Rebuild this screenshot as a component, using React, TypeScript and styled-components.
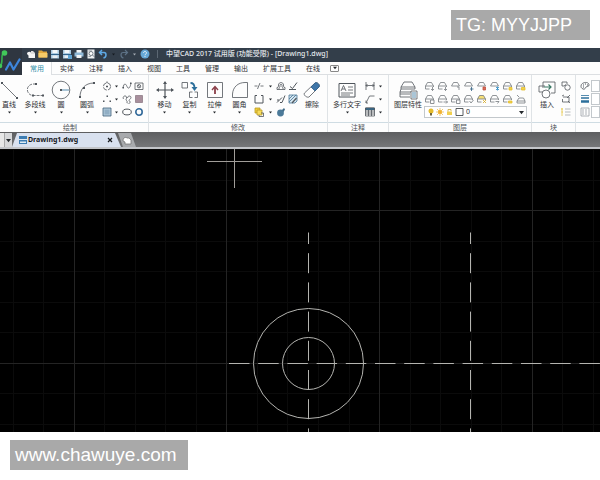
import React, { ReactNode } from "react";
import styled, { createGlobalStyle } from "styled-components";

const GlobalStyle = createGlobalStyle`
  * { box-sizing: border-box; }
  body {
    margin: 0;
    background: #fff;
    font-family: "Noto Sans", "Noto Sans CJK SC", sans-serif;
    font-size: 7px;
    color: #2d3034;
  }
  button, select, input {
    font: inherit;
    color: inherit;
    border: 0;
    padding: 0;
    margin: 0;
    background: none;
    border-radius: 0;
  }
`;

/* ---------- page frame ---------- */

const Page = styled.div`
  display: flex;
  flex-direction: column;
  min-height: 100vh;
`;

const Band = styled.div<{ $end?: boolean }>`
  display: flex;
  justify-content: ${(p) => (p.$end ? "flex-end" : "flex-start")};
  padding: ${(p) => (p.$end ? "10px 10px 8px" : "8px 10px 10px")};
`;

const Stamp = styled.div<{ $wide?: boolean }>`
  min-width: ${(p) => (p.$wide ? "178px" : "139px")};
  padding: 0 5px;
  background: #a9a9a9;
  color: #fff;
  font-family: "Liberation Sans", sans-serif;
  font-size: ${(p) => (p.$wide ? "19px" : "18px")};
  line-height: 30px;
  white-space: nowrap;
`;

const Window = styled.main`
  flex: 1;
  display: flex;
  flex-direction: column;
  overflow: hidden;
`;

/* ---------- title bar and menu ---------- */

const Top = styled.header`
  display: flex;
  background: #fdfdfd;
`;

const LogoBox = styled.div`
  flex: none;
  width: 22px;
  height: 27px;
  background: #2f3640;
`;

const TopRows = styled.div`
  flex: 1;
  min-width: 0;
`;

const TitleBar = styled.div`
  display: flex;
  align-items: center;
  height: 14px;
  padding: 0 0 2px 3px;
  background: #333e4a;
  color: #e4e8ec;
  white-space: nowrap;
`;

const QuickButton = styled.button<{ $narrow?: boolean }>`
  display: grid;
  place-items: center;
  width: ${(p) => (p.$narrow ? "9px" : "12px")};
  height: 12px;
`;

const Divider = styled.span`
  width: 1px;
  height: 8px;
  margin: 0 8px 0 6px;
  background: #5c6773;
`;

const Title = styled.h1`
  margin: 0;
  font-size: 7px;
  line-height: 10px;
  font-weight: 500;
`;

const Menu = styled.nav`
  display: flex;
  align-items: stretch;
  height: 13px;
  border-bottom: 1px solid #dcdfe2;
`;

const MenuItem = styled.button<{ $active?: boolean }>`
  height: 13px;
  padding: 0 7px 0 8px;
  line-height: 14px;
  white-space: nowrap;
  color: ${(p) => (p.$active ? "#2f8ea8" : "#2d3034")};
  background: ${(p) => (p.$active ? "#fff" : "transparent")};
  border-right: ${(p) => (p.$active ? "1px solid #dcdfe2" : "0")};
`;

const MenuToggle = styled.button`
  display: grid;
  place-items: center;
  align-self: center;
  width: 9px;
  height: 7px;
  margin-left: 3px;
  border: 1px solid #888;
  border-radius: 1px;
`;

/* ---------- ribbon ---------- */

const Ribbon = styled.section`
  display: flex;
  background: #fdfdfd;
`;

const GroupBox = styled.section<{ $fill?: boolean }>`
  flex: ${(p) => (p.$fill ? "1 0 0" : "none")};
  min-width: 0;
  overflow: hidden;
  & + & { border-left: 1px solid #dfe3e6; }
`;

const GroupBody = styled.div<{ $cut?: boolean }>`
  display: flex;
  height: 47px;
  padding: 5px 3px 0 ${(p) => (p.$cut ? "0" : "3px")};
`;

const GroupName = styled.h2<{ $cut?: boolean }>`
  height: 10px;
  margin: 0;
  padding-right: ${(p) => (p.$cut ? "8px" : "0")};
  border-top: 1px solid #cfdce3;
  font-size: 7px;
  font-weight: 400;
  line-height: 9px;
  text-align: center;
  color: #4b4f54;
`;

const Tool = styled.button<{ $w: number; $cut?: boolean }>`
  display: flex;
  flex-direction: column;
  align-items: center;
  flex: none;
  width: ${(p) => p.$w}px;
  height: 38px;
  margin-left: ${(p) => (p.$cut ? "-4px" : "0")};
  white-space: nowrap;
`;

const ToolName = styled.span`
  height: 11px;
  line-height: 10px;
`;

const Small = styled.div<{ $cols: string }>`
  display: grid;
  flex: none;
  grid-template-columns: ${(p) => p.$cols};
  grid-auto-rows: 12px;
  row-gap: 1px;
  align-content: start;
  padding-left: 1px;
`;

const SmallButton = styled.button`
  display: grid;
  place-items: center;
`;

const LayerStack = styled.div`
  display: flex;
  flex-direction: column;
  gap: 1px;
  width: 103px;
  margin-right: 1px;
`;

const LayerGrid = styled.div`
  display: grid;
  grid-template-columns: repeat(8, 1fr);
  grid-auto-rows: 12px;
  row-gap: 1px;
`;

const LayerPicker = styled.label`
  display: flex;
  align-items: center;
  height: 12px;
  padding: 0 2px;
  border: 1px solid #c3c8cc;
  background: #fff;
`;

const LayerSelect = styled.select`
  flex: 1;
  min-width: 0;
  height: 10px;
  padding-left: 1px;
  line-height: 10px;
  appearance: none;
`;

const Properties = styled.div`
  display: grid;
  grid-template-columns: 12px minmax(9px, 1fr);
  grid-auto-rows: 12px;
  row-gap: 1px;
  width: 100%;
  margin-right: -3px;
`;

const Field = styled.input`
  min-width: 0;
  border: 1px solid #c3c8cc;
  background: #fff;
`;

/* ---------- document tabs ---------- */

const DocBar = styled.div`
  display: flex;
  height: 17px;
  padding-top: 1px;
  background: linear-gradient(#5d5e60, #757678);
  border-bottom: 2px solid #c3c5c9;
`;

const DocList = styled.button`
  display: grid;
  place-items: center;
  width: 12px;
  background: linear-gradient(90deg, #e7e7e7 4px, #777 4px, #d7d8da 5px);
  padding-left: 4px;
`;

const DocTab = styled.div`
  display: flex;
  align-items: center;
  width: 109px;
  padding: 0 5px 0 6px;
  background: #d9e1ef;
  clip-path: polygon(0 100%, 5px 0, 103px 0, 100% 100%);
`;

const DocName = styled.span`
  flex: 1;
  font-size: 7px;
  line-height: 12px;
  font-weight: 700;
  color: #15181d;
`;

const CloseButton = styled.button`
  display: grid;
  place-items: center;
  width: 12px;
  height: 12px;
`;

const NewTab = styled.button`
  display: grid;
  place-items: center;
  width: 18px;
  margin-left: -3px;
  background: #a8aaad;
  clip-path: polygon(0 0, 13px 0, 100% 100%, 5px 100%);
`;

const Canvas = styled.svg`
  display: block;
  flex: 1 0 283px;
  width: 100%;
  background: #000;
`;

/* ---------- icons ---------- */

const INK = "#50565c";
const BLUE = "#2c6f9b";

function Icon({ w = 10, h = 10, box, stroke = INK, children }: {
  w?: number; h?: number; box?: string; stroke?: string; children: ReactNode;
}) {
  return (
    <svg width={w} height={h} viewBox={box ?? `0 0 ${w} ${h}`} fill="none" stroke={stroke} strokeWidth="0.8" aria-hidden="true">
      {children}
    </svg>
  );
}

const Arrow = ({ color = "#24282c", size = 3 }: { color?: string; size?: number }) => (
  <svg width={size} height={size} viewBox="0 0 4 4" aria-hidden="true"><path d="M0 .7H4L2 3.3Z" fill={color} /></svg>
);

const Floppy = ({ extra }: { extra?: boolean }) => (
  <Icon stroke="none">
    <path d="M1 1H9V9.500H1Z" fill="#a9c9e0" />
    <path d="M2.500 1H7.500V4H2.500Z" fill="#f4f8fb" />
    <path d="M1 5H9V6H1Z" fill="#33668f" />
    <path d="M2.500 6.500H7.500V9H2.500Z" fill="#e9eff4" />
    {extra && <path d="M6 6H10V10H6Z" fill="#5fa4d3" />}
  </Icon>
);

const quick: { name: string; narrow?: boolean; icon: ReactNode }[] = [
  { name: "New", icon: <Icon stroke="none"><path d="M1 5C1 2.500 4 2 5 3.500L9 4V9H2.500V6.500Z" fill="#f4f4f4" /><path d="M5 2H7L9 4V5H5Z" fill="#dcdcdc" /></Icon> },
  { name: "Open", icon: <Icon stroke="none"><path d="M.5 1.500H4L5 2.500H9V8.500H.5Z" fill="#e2a83c" /><path d="M.5 4H9.500V8.500H.5Z" fill="#f6cb68" /></Icon> },
  { name: "Save", icon: <Floppy /> },
  { name: "Save as", icon: <Floppy extra /> },
  { name: "Print", icon: <Icon stroke="none"><path d="M2.500 1H7.500V4H2.500Z" fill="#f2f5f7" /><path d="M.5 3.500H9.500V7.500H.5Z" fill="#8fb9d8" /><path d="M2.500 6H7.500V9H2.500Z" fill="#f2f5f7" /></Icon> },
  { name: "Preview", icon: <Icon stroke="none"><path d="M1.500 .5H8.500V9.500H1.500Z" fill="#eef0f2" /><path d="M2.500 2H6M2.500 7.500H5" stroke="#727b84" strokeWidth=".7" /><circle cx="5" cy="4.500" r="2" stroke="#5b646d" fill="#fff" strokeWidth=".8" /><path d="M6.500 6L9 8.500" stroke="#5b646d" /></Icon> },
  { name: "Undo", icon: <Icon stroke="#5fa9e4"><path d="M4 1L1.500 3.500L4 6M1.500 3.500H6C8.500 3.500 9 8 5.500 9" strokeWidth="1.500" /></Icon> },
  { name: "Undo list", narrow: true, icon: <Arrow color="#151a20" /> },
  { name: "Redo", icon: <Icon stroke="#5d7286"><path d="M6 1L8.500 3.500L6 6M8.500 3.500H4C1.500 3.500 1 8 4.500 9" strokeWidth="1.200" /></Icon> },
  { name: "Redo list", narrow: true, icon: <Arrow color="#a6adb5" /> },
  { name: "Help", icon: <Icon stroke="none"><circle cx="5" cy="5" r="4.500" fill="#66a9d8" /><path d="M3.500 4C3.500 2 6.500 2 6.500 4C6.500 5 5 5 5 6.300M5 7V8" stroke="#fff" /></Icon> },
];

const Logo = () => (
  <svg width="22" height="27" viewBox="0 0 22 27" fill="none" aria-hidden="true">
    <path d="M-1 18C2 18 2 14 2 9C2 6 3 5 5 5" stroke="#35b24e" strokeWidth="1.600" />
    <circle cx="4.500" cy="5" r="2.800" fill="#42c75a" />
    <circle cx="0" cy="18" r="2.300" fill="#42c75a" />
    <path d="M6 21.500L10 14.500L13.500 21.500L19.500 11.500" stroke="#3d86dc" strokeWidth="2.200" strokeLinecap="round" strokeLinejoin="round" />
  </svg>
);

/* A sheet stack: trapezoid lid, front plate, and a small mark at the lower right. */
const Stack = ({ mark, color, fill = "none" }: { mark: ReactNode; color?: string; fill?: string }) => (
  <Icon stroke="#73797e">
    <path d="M2.500 1.500H6.500L8.500 5H.5Z" fill={fill} />
    <path d="M.5 5V8H4.500M8.500 5V6" />
    <g stroke={color ?? "#73797e"}>{mark}</g>
  </Icon>
);

const Lid = ({ mark, color }: { mark: ReactNode; color?: string }) => (
  <Icon stroke="#73797e">
    <path d="M2.500 1.500H6.500L8.500 5H.5Z" />
    <g stroke={color ?? "#73797e"}>{mark}</g>
  </Icon>
);

const layerIcons: { name: string; icon: ReactNode }[] = [
  { name: "Make current", icon: <Stack mark={<path d="M7.500 6V9.500M6 8L7.500 9.500L9 8" />} /> },
  { name: "Match layer", icon: <Stack mark={<path d="M7.500 6V9.500M6 8L7.500 9.500L9 8" />} /> },
  { name: "Previous layer", icon: <Lid mark={<path d="M8 9V6H6" />} /> },
  { name: "Isolate", icon: <Lid mark={<path d="M6 8H9.500M7.500 6V10" />} color="#2f5e80" /> },
  { name: "Layer off", icon: <Lid mark={<path d="M6 6H8.500V9H6Z" fill="#d66e5a" />} color="#c44e3e" /> },
  { name: "Freeze", icon: <Lid mark={<path d="M6 6L9 9M9 6L6 9M7.500 5.500V9.500" />} color="#2989c2" /> },
  { name: "Lock layer", icon: <Stack mark={<path d="M6 6.500H9V9H6Z" fill="#f2d34b" />} color="#e3bc2c" /> },
  { name: "Unlock layer", icon: <Stack mark={<path d="M5.500 6.500H9V9H5.500Z" fill="#f2d34b" />} color="#e3bc2c" /> },
  { name: "Copy to layer", icon: <Stack mark={<path d="M5.500 6H9V9.500H5.500Z" fill="#fff" />} /> },
  { name: "Walk layers", icon: <Stack mark={<path d="M5.500 8H9.500M8 6.500L9.500 8L8 9.500" />} /> },
  { name: "Merge layer", icon: <Stack mark={<path d="M5.500 6H9V9.500H5.500Z" fill="#fff" />} /> },
  { name: "Delete layer", icon: <Stack mark={<path d="M5.500 7L7 9L9.500 6" />} /> },
  { name: "Layers on", icon: <Stack fill="#f6df77" mark={<path d="M6 6L9 9M9 6L6 9" />} color="#d6a921" /> },
  { name: "Thaw layers", icon: <Stack mark={<path d="M5.500 7.500H9L7.500 9.500" />} /> },
  { name: "Layer states", icon: <Stack mark={<path d="M5.500 7H9V9H5.500Z" fill="#f2d34b" />} color="#e3bc2c" /> },
  { name: "Translate", icon: <Icon stroke="#73797e"><path d="M1 1L3 3M3 4H7.500L9 7V9H1V7ZM1 7H9" /></Icon> },
];

type Cell = { name: string; icon: ReactNode };
const more = (name: string): Cell => ({ name, icon: <Arrow size={3} /> });

const drawSmall: Cell[] = [
  { name: "Ellipse by centre", icon: <Icon><circle cx="5" cy="5.500" r="3.600" strokeDasharray="4.500 1.200" /><path d="M4 5.500H6M5 4.500V6.500M5 .5V2" strokeWidth="1" /></Icon> },
  more("Centre options"),
  { name: "Spline", icon: <Icon><path d="M1 7C2 1 4 3 5 5.500S8 8 9 2" /><path d="M.5 6H2V7.500H.5ZM8 1.500H9.500V3H8Z" fill={INK} stroke="none" /></Icon> },
  { name: "Wipeout", icon: <Icon><path d="M1 2H9V8.500H1Z" /><circle cx="5" cy="5.200" r="1.700" /><path d="M4 4L6 6.500" /></Icon> },
  { name: "Points", icon: <Icon stroke="none"><path d="M4.500 1.500H6V3H4.500ZM1 6.500H2.500V8H1ZM7.500 6.500H9V8H7.500Z" fill={INK} /></Icon> },
  more("Point options"),
  { name: "Sketch", icon: <Icon><path d="M1.500 5C0 2 4 1 4.500 3S3 6 4.500 6.500S4 9.500 5.500 9M5.500 4C5.500 1.500 9 1.500 9 3.500S6 5.500 7.500 7S8 9 6.500 9.500" /></Icon> },
  { name: "Gradient", icon: <Icon stroke="#8f7d88"><path d="M1.500 1.500H8.500V8.500H1.500Z" fill="#a88f9c" /></Icon> },
  { name: "Hatch", icon: <Icon stroke="#3f6079"><path d="M1 1H9V9H1Z" fill="#b3cbdc" /><path d="M2.500 2.500H7.500V7.500H2.500Z" fill="#91aec4" stroke="none" /></Icon> },
  more("Hatch options"),
  { name: "Ellipse", icon: <Icon><ellipse cx="5" cy="5" rx="4.300" ry="2.900" strokeWidth="1" /></Icon> },
  { name: "Donut", icon: <Icon stroke="#346b9b"><circle cx="5" cy="5" r="3.200" strokeWidth="1.600" /></Icon> },
];

const modifySmall: Cell[] = [
  { name: "Trim", icon: <Icon><path d="M.5 5H3.500M6.500 5H9.500M3.500 8L6 2" /></Icon> },
  more("Trim options"),
  { name: "Offset", icon: <Icon><path d="M1 8.500H9V6.500C7.500 6.500 7.500 5.500 7.500 4C7.500 .8 2.500 .8 2.500 4C2.500 5.500 2.500 6.500 1 6.500ZM3 8V6.800C4.200 6 4 5.500 4 4.300C4 3 6 3 6 4.300C6 5.500 5.800 6 7 6.800V8" /></Icon> },
  { name: "Break", icon: <Icon><path d="M1 8.500H8M2 5.500L4.500 7.500L9 1.500" strokeWidth="1" /></Icon> },
  { name: "Join", icon: <Icon><path d="M3 1.500H1V9H9V1.500H7" strokeWidth="1" /></Icon> },
  more("Join options"),
  { name: "Align", icon: <Icon><path d="M1 8.500L6 3.500M4 8.500H6L9 1.500M1 6H3" strokeWidth="1" /></Icon> },
  { name: "Edit hatch", icon: <Icon stroke="#467596"><path d="M1 1H9V7L7 9H1Z" fill="#d6e7f1" /><path d="M1 5L5 1M1 8L8 1" /><path d="M4 9L8.500 4" stroke={INK} strokeWidth="1.200" /></Icon> },
  { name: "Group", icon: <Icon stroke="#b79a24"><path d="M1 1H6V6H1Z" fill="#f4cf3c" /><path d="M3 3H8V8H3Z" fill="#f8dc5b" /><path d="M7 6H9.500V9.500H5V8" stroke={INK} /></Icon> },
  more("Group options"),
  { name: "Explode", icon: <Icon stroke="none"><circle cx="4.500" cy="6" r="3.400" fill="#4c7a99" /><path d="M6 3L8 1L9 2.500L7.500 5" fill="#406b88" /></Icon> },
];

const annotateSmall: Cell[] = [
  { name: "Dimension", icon: <Icon><path d="M1 1V9M9 1V9M1 4.500H9M2.500 3L1 4.500L2.500 6M7.500 3L9 4.500L7.500 6" /></Icon> },
  more("Dimension options"),
  { name: "Leader", icon: <Icon><path d="M1 9L4.500 2H9.500M1 6.500V9H3" /></Icon> },
  more("Leader options"),
  { name: "Table", icon: <Icon><path d="M.5 1H9.500V9H.5ZM.5 5H9.500M.5 7H9.500M3.500 3V9M6.500 3V9" /><path d="M.5 1H9.500V3H.5Z" fill={BLUE} /></Icon> },
  more("Table options"),
];

const blockSmall: Cell[] = [
  { name: "Create block", icon: <Icon><path d="M3 5H1V1H6V3" /><circle cx="6.500" cy="6.500" r="2.700" /><path d="M3 5L5 3.500" /></Icon> },
  { name: "Edit block", icon: <Icon><path d="M2 3H8V8H1.500V5M1 2L3 1M6 4L9 1" /><path d="M7 7L9 9" /></Icon> },
  { name: "Attributes", icon: <Icon stroke="#a2a7ab"><path d="M4 2H9.500M4 5H9.500M4 8H9.500" /><path d="M1 1V9M0 2L2 2M.5 5H2" stroke="#e6c645" /></Icon> },
];

function SmallTools({ cols, cells }: { cols: string; cells: Cell[] }) {
  return (
    <Small $cols={cols}>
      {cells.map((c) => <SmallButton key={c.name} type="button" aria-label={c.name}>{c.icon}</SmallButton>)}
    </Small>
  );
}

function BigTool({ label, width, cut, menu = true, children }: {
  label: string; width: number; cut?: boolean; menu?: boolean; children: ReactNode;
}) {
  return (
    <Tool type="button" $w={width} $cut={cut}>
      <Icon w={20} h={20}>{children}</Icon>
      <ToolName>{label}</ToolName>
      {menu && <Arrow />}
    </Tool>
  );
}

function Group({ name, cut, fill, children }: { name: string; cut?: boolean; fill?: boolean; children: ReactNode }) {
  return (
    <GroupBox $fill={fill}>
      <GroupBody $cut={cut}>{children}</GroupBody>
      <GroupName $cut={cut}>{name}</GroupName>
    </GroupBox>
  );
}

const menuItems = ["常用", "实体", "注释", "插入", "视图", "工具", "管理", "输出", "扩展工具", "在线"];

const PITCH = 30.55;
const gridLines = Array.from({ length: 100 }, (_, i) => i);

function Drawing() {
  return (
    <Canvas role="img" aria-label="Drawing1">
      <g stroke="#0b0b0b" shapeRendering="crispEdges">
        {gridLines.map((i) => <line key={`v${i}`} x1={13 + i * PITCH} x2={13 + i * PITCH} y1="0" y2="100%" />)}
        {gridLines.map((i) => <line key={`h${i}`} y1={0.5 + i * PITCH} y2={0.5 + i * PITCH} x1="0" x2="100%" />)}
      </g>
      <g stroke="#242424" shapeRendering="crispEdges">
        {gridLines.map((i) => <line key={`v${i}`} x1={74 + i * PITCH * 5} x2={74 + i * PITCH * 5} y1="0" y2="100%" />)}
        {gridLines.map((i) => <line key={`h${i}`} y1={61.5 + i * PITCH * 5} y2={61.5 + i * PITCH * 5} x1="0" x2="100%" />)}
      </g>
      <g stroke="#b4b4b0" fill="none">
        <path d="M207 12.500H262M234.500 0V39" stroke="#a09d99" />
        <circle cx="308.500" cy="214.500" r="55" />
        <circle cx="308.500" cy="214.500" r="26" />
        <line x1="308.500" x2="308.500" y1="83.500" y2="100%" strokeDasharray="20 9.200" strokeDashoffset="8.500" />
        <line x1="470.500" x2="470.500" y1="83.500" y2="100%" strokeDasharray="20 9.200" strokeDashoffset="8.500" />
        <line x1="229" x2="100%" y1="214.500" y2="214.500" strokeDasharray="20.500 8.700" />
      </g>
    </Canvas>
  );
}

export default function App() {
  return (
    <Page>
      <GlobalStyle />
      <Band $end><Stamp>TG: MYYJJPP</Stamp></Band>
      <Window>
        <Top>
          <LogoBox><Logo /></LogoBox>
          <TopRows>
            <TitleBar>
              {quick.map((q) => (
                <QuickButton key={q.name} type="button" aria-label={q.name} $narrow={q.narrow}>{q.icon}</QuickButton>
              ))}
              <Divider />
              <Title>中望CAD 2017 试用版 (功能受限) - [Drawing1.dwg]</Title>
            </TitleBar>
            <Menu>
              {menuItems.map((m, i) => <MenuItem key={m} type="button" $active={i === 0}>{m}</MenuItem>)}
              <MenuToggle type="button" aria-label="Ribbon display"><Arrow size={4} /></MenuToggle>
            </Menu>
          </TopRows>
        </Top>

        <Ribbon>
          <Group name="绘制" cut>
            <BigTool label="直线" width={26} cut>
              <path d="M3 3L18 18" /><path d="M2 2H4V4H2ZM17 17H19V19H17Z" fill={INK} stroke="none" />
            </BigTool>
            <BigTool label="多段线" width={26}>
              <path d="M11 4H8C0 5 1 15 8 15.500H18" strokeDasharray="3 1" /><path d="M10 3H12V5H10ZM7 14.500H9V16.500H7ZM17 14.500H19V16.500H17Z" fill={INK} stroke="none" />
            </BigTool>
            <BigTool label="圆" width={26}>
              <circle cx="10" cy="10" r="8.800" /><path d="M10 10H18" stroke={BLUE} /><path d="M9 9H11V11H9Z" fill={INK} stroke="none" />
            </BigTool>
            <BigTool label="圆弧" width={26}>
              <path d="M3 17C3 9 8 3 17 3" /><path d="M2 16H4V18H2ZM6 7H8V9H6ZM16 2H18V4H16Z" fill={INK} stroke="none" />
            </BigTool>
            <SmallTools cols="11px 8px 13px 12px" cells={drawSmall} />
          </Group>
          <Group name="修改">
            <BigTool label="移动" width={25}>
              <path d="M10 2V18M2 10H18" strokeWidth="1.200" /><path d="M10 1L12 4H8ZM10 19L8 16H12ZM1 10L4 8V12ZM19 10L16 12V8Z" fill={INK} stroke="none" />
            </BigTool>
            <BigTool label="复制" width={25}>
              <path d="M2 2.500H7.500V8H2ZM12.500 12H9.500V17.500H12.500M14.500 12H17.500V17.500H14.500" /><path d="M10.500 3C14 3 14.500 5 14.500 8" stroke={BLUE} strokeWidth="1.800" /><path d="M11.500 7H17.500L14.500 11Z" fill={BLUE} stroke="none" />
            </BigTool>
            <BigTool label="拉伸" width={25}>
              <path d="M2.500 2.500H17.500V17.500H2.500Z" /><path d="M10 14V7" stroke="#8b3f49" strokeWidth="1.800" /><path d="M7 10L10 6.500L13 10" stroke="#8b3f49" strokeWidth="1.400" />
            </BigTool>
            <BigTool label="圆角" width={25}>
              <path d="M2.500 17.500V14C3 7 8 2.500 15 2.500H17.500V17.500Z" />
            </BigTool>
            <SmallTools cols="12px 10px 11px 14px" cells={modifySmall} />
            <BigTool label="擦除" width={24} menu={false}>
              <path d="M2.500 13L13 3C15 1.500 18.500 5 17 7L7 17C5 18 1 15 2.500 13Z" fill="#fff" /><path d="M9 7L13 3C15 1.500 18.500 5 17 7L13 11Z" fill="#3f76a8" stroke="#315f88" />
            </BigTool>
          </Group>
          <Group name="注释">
            <BigTool label="多行文字" width={32}>
              <path d="M2 3.500H18V17H2Z" strokeWidth="1" /><path d="M4 11L6.500 5.500L9 11M5 9H8M11 7H16M11 10H16M4 13H16M4 15H13" />
            </BigTool>
            <SmallTools cols="12px 9px" cells={annotateSmall} />
          </Group>
          <Group name="图层">
            <BigTool label="图层特性" width={32} menu={false}>
              <path d="M6 2H14L17 7H3ZM3 7V9H17V7M3 9L2 12H16M2 12V14H12M2 14V17H12" /><path d="M13 11H19V19H13Z" fill="#fff" /><path d="M14 13H18M14 15H18M14 17H18" stroke={BLUE} />
            </BigTool>
            <LayerStack>
              <LayerGrid>
                {layerIcons.map((l) => <SmallButton key={l.name} type="button" aria-label={l.name}>{l.icon}</SmallButton>)}
              </LayerGrid>
              <LayerPicker>
                <Icon w={38} h={10} stroke="none">
                  <circle cx="4" cy="4" r="2.500" fill="#e6bd2c" /><path d="M3 6H5V8.500H3Z" fill="#70653d" />
                  <circle cx="13" cy="5" r="2" fill="#f0b12e" /><path d="M13 1V9M9 5H17M10 2L16 8M16 2L10 8" stroke="#f0b12e" strokeWidth=".7" />
                  <path d="M20 4.500H25V8H20Z" fill="#f1cf4e" /><path d="M21 4.500V2.500H24V4" stroke="#c6a438" />
                  <path d="M29 1.500H36V8.500H29Z" stroke="#30353a" />
                </Icon>
                <LayerSelect aria-label="图层" defaultValue="0"><option value="0">0</option></LayerSelect>
                <Arrow size={5} />
              </LayerPicker>
            </LayerStack>
          </Group>
          <Group name="块">
            <BigTool label="插入" width={24} menu={false}>
              <path d="M6 8V2H18V13H14M2 6H8M2 6V12H6" /><circle cx="9" cy="14" r="4" fill="#fff" /><path d="M7 7H14M11.500 4.500L14 7L11.500 9.500" stroke="#397864" strokeWidth="1.200" />
            </BigTool>
            <SmallTools cols="12px" cells={blockSmall} />
          </Group>
          <Group name="" fill>
            <Properties>
              <SmallButton type="button" aria-label="Colour"><Icon><path d="M1 5C1 1 9 0 9 4C9 6 7 5 6 6S5 9 3 8S1 6 1 5Z" /><path d="M3 4H4M5 3H6M7 4H8M3 6H4" strokeWidth="1.200" /></Icon></SmallButton>
              <Field aria-label="Colour value" />
              <SmallButton type="button" aria-label="Line weight"><Icon stroke={BLUE}><path d="M1 1.500H9" /><path d="M1 4H9" strokeWidth="1.500" /><path d="M1 7.500H9" strokeWidth="2.500" /></Icon></SmallButton>
              <Field aria-label="Line weight value" />
              <SmallButton type="button" aria-label="Line type"><Icon stroke="#999fa4"><path d="M1 1H9V9H1Z" /><path d="M2 3H8M2 5H8M2 7H8" strokeDasharray="2 1" /></Icon></SmallButton>
              <Field aria-label="Line type value" />
            </Properties>
          </Group>
        </Ribbon>

        <DocBar>
          <DocList type="button" aria-label="Documents"><Arrow size={5} /></DocList>
          <DocTab>
            <Icon stroke="none"><path d="M1 1H9V9H1Z" fill="#3d7db3" /><path d="M1 4H9V5H1ZM2 6.500H8V8H2Z" fill="#dcebf5" /></Icon>
            <DocName>Drawing1.dwg</DocName>
            <CloseButton type="button" aria-label="Close"><Icon w={6} h={6} stroke="#16191c"><path d="M1 1L5 5M5 1L1 5" strokeWidth="1.200" /></Icon></CloseButton>
          </DocTab>
          <NewTab type="button" aria-label="New drawing"><Icon stroke="#777"><path d="M1 6C1 2 4 2 5 3H7L9 5V9H3V7Z" fill="#fff" /></Icon></NewTab>
        </DocBar>
        <Drawing />
      </Window>
      <Band><Stamp $wide>www.chawuye.com</Stamp></Band>
    </Page>
  );
}
